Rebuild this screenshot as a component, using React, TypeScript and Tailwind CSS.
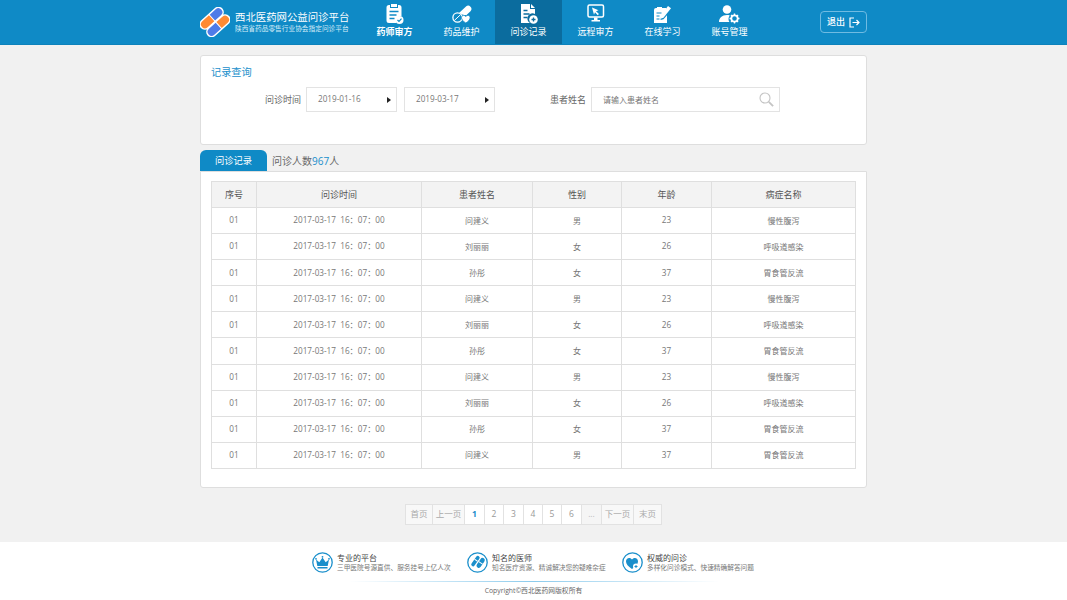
const font = { fontFamily: '"Open Sans", "Noto Sans CJK SC", sans-serif' };

const rows = [
  ["问建义", "男", "23", "慢性腹泻"],
  ["刘丽丽", "女", "26", "呼吸道感染"],
  ["孙彤", "女", "37", "胃食管反流"],
  ["问建义", "男", "23", "慢性腹泻"],
  ["刘丽丽", "女", "26", "呼吸道感染"],
  ["孙彤", "女", "37", "胃食管反流"],
  ["问建义", "男", "23", "慢性腹泻"],
  ["刘丽丽", "女", "26", "呼吸道感染"],
  ["孙彤", "女", "37", "胃食管反流"],
  ["问建义", "男", "37", "胃食管反流"],
];

function Logo() {
  return (
    <svg width="30" height="30" viewBox="0 0 30 30">
      <g transform="rotate(-42 15 15)">
        {/* upper capsule */}
        <rect x="0.500" y="4.500" width="29" height="11" rx="5.500" fill="#fff" />
        <path d="M2 10a4 4 0 0 1 4-4h9v8h-9a4 4 0 0 1-4-4z" fill="#ff8a33" />
        <path d="M28 10a4 4 0 0 0-4-4h-8v8h8a4 4 0 0 0 4-4z" fill="#4f7be8" />
        {/* lower capsule */}
        <rect x="0.500" y="14.500" width="29" height="11" rx="5.500" fill="#fff" />
        <path d="M2 20a4 4 0 0 1 4-4h9v8h-9a4 4 0 0 1-4-4z" fill="#4f7be8" />
        <path d="M28 20a4 4 0 0 0-4-4h-8v8h8a4 4 0 0 0 4-4z" fill="#ff8a33" />
      </g>
    </svg>
  );
}

function IconClipboard() {
  return (
    <svg width="18" height="22" viewBox="0 0 18 22" fill="#fff">
      <path d="M5 1h6v3h-6z" />
      <path d="M3 2h1v3h8v-3h1a2.500 2.500 0 0 1 2.500 2.500v8.500a5 5 0 0 0-5 7h-7.500a2.500 2.500 0 0 1-2.500-2.500v-13a2.500 2.500 0 0 1 2.500-2.500z" />
      <path d="M3.500 8.500h9M3.500 12h7M3.500 15.500h5" stroke="#0f8ac6" strokeWidth="1.500" />
      <circle cx="13.500" cy="17" r="4" fill="#fff" />
      <path d="M11.500 17l1.500 1.500 2.500-2.800" fill="none" stroke="#0f8ac6" strokeWidth="1.200" />
    </svg>
  );
}

function IconPills() {
  return (
    <svg width="21" height="20" viewBox="0 0 21 20">
      <path d="M8 9l7-6.500a3.300 3.300 0 0 1 4.500 4.800l-4 3.700h-3z" fill="#fff" />
      <circle cx="6.500" cy="13.500" r="4.600" fill="#0f8ac6" stroke="#fff" strokeWidth="1.300" />
      <path d="M3.300 16.500l6.400-6" stroke="#fff" strokeWidth="1" />
      <path d="M14.800 19c-3-2-4.300-3.500-4.300-5.300 0-1.500 1-2.400 2.100-2.400.9 0 1.700.5 2.200 1.300.5-.8 1.300-1.300 2.200-1.300 1.100 0 2.100.9 2.100 2.400 0 1.800-1.300 3.300-4.300 5.300z" fill="#fff" stroke="#0f8ac6" strokeWidth="0.800" />
    </svg>
  );
}

function IconDocPlus() {
  return (
    <svg width="18" height="20" viewBox="0 0 18 20" fill="#fff">
      <path d="M1 0h9v5h5v5a5 5 0 0 0-5 9h-9z" />
      <path d="M11 0l4 4h-4z" />
      <path d="M3.500 6.500h4M3.500 10h6M3.500 13.500h4" stroke="#0b6c9e" strokeWidth="1.500" />
      <circle cx="13.500" cy="15.500" r="4.300" />
      <path d="M11.500 15.500h4M13.500 13.500v4" stroke="#0b6c9e" strokeWidth="1.300" />
    </svg>
  );
}

function IconMonitor() {
  return (
    <svg width="18" height="20" viewBox="0 0 18 20" fill="none">
      <rect x="1" y="1" width="15.500" height="12" rx="1.500" stroke="#fff" strokeWidth="1.500" />
      <path d="M5 3.500l6.500 2.800-2.500 1 3 2.700-1.300 1.300-2.700-3-1 2.500z" fill="#fff" />
      <path d="M7 13.500h3.500v2.500h-3.500zM4.500 16h8.500v1.500h-8.500z" fill="#fff" />
    </svg>
  );
}

function IconStudy() {
  return (
    <svg width="19" height="18" viewBox="0 0 19 18" fill="#fff">
      <path d="M1 5a2 2 0 0 1 2-2h10v3l-5 6-.5 3 3-.8 3.500-4v7.800h-13z" />
      <path d="M4 2h5v2h-5z" />
      <path d="M3.500 8h5M3.500 11h3M3.500 14h3" stroke="#0f8ac6" strokeWidth="1" />
      <path d="M15 1l3 2.200-7.500 9.500-3 1 .3-3.200z" />
    </svg>
  );
}

function IconUserGear() {
  return (
    <svg width="21" height="19" viewBox="0 0 21 19" fill="#fff">
      <circle cx="8" cy="4.500" r="4.300" />
      <path d="M0 17c0-4 3-7 8-7 1 0 2 .1 2.800.4a6 6 0 0 0-.4 6.600z" />
      <circle cx="15.500" cy="13.500" r="3.200" fill="none" stroke="#fff" strokeWidth="1.800" />
      <path d="M15.500 8.500v2M15.500 16.500v2M10.500 13.500h2M18.500 13.500h2M12 10l1.400 1.400M17.600 15.600l1.400 1.400M12 17l1.400-1.400M17.600 11.400l1.400-1.400" stroke="#fff" strokeWidth="1.400" />
    </svg>
  );
}

function IconLogout() {
  return (
    <svg width="11" height="11" viewBox="0 0 11 11" fill="none" stroke="#fff" strokeWidth="1.200">
      <path d="M5 1h-4v9h4" />
      <path d="M3.500 5.500h6M7.500 3l2.500 2.500-2.500 2.500" />
    </svg>
  );
}

function IconSearch() {
  return (
    <svg width="15" height="15" viewBox="0 0 15 15" fill="none" stroke="#c4c4c4">
      <circle cx="6" cy="6" r="5" strokeWidth="1.100" />
      <path d="M9.800 9.800l4.300 4.300" strokeWidth="1.800" />
    </svg>
  );
}

function FootCircle({ children }: { children: React.ReactNode }) {
  return (
    <svg width="21" height="21" viewBox="0 0 21 21">
      <circle cx="10.500" cy="10.500" r="9.700" fill="#fff" stroke="#1a8fcb" strokeWidth="1.300" />
      {children}
    </svg>
  );
}

const navItems = [
  { label: "药师审方", icon: <IconClipboard />, bold: true },
  { label: "药品维护", icon: <IconPills /> },
  { label: "问诊记录", icon: <IconDocPlus />, active: true },
  { label: "远程审方", icon: <IconMonitor /> },
  { label: "在线学习", icon: <IconStudy /> },
  { label: "账号管理", icon: <IconUserGear /> },
];

const pages = [
  { t: "首页", w: "w-[27px]", word: true },
  { t: "上一页", w: "w-[32px]", word: true },
  { t: "1", w: "w-[20px]", on: true },
  { t: "2", w: "w-[19px]" },
  { t: "3", w: "w-[20px]" },
  { t: "4", w: "w-[19px]" },
  { t: "5", w: "w-[19px]" },
  { t: "6", w: "w-[20px]" },
  { t: "...", w: "w-[20px]", off: true },
  { t: "下一页", w: "w-[32px]", word: true },
  { t: "末页", w: "w-[28px]", word: true },
];

const features = [
  {
    title: "专业的平台",
    desc: "三甲医院号源直供、服务挂号上亿人次",
    icon: (
      <FootCircle>
        <path d="M4 7.500l3.300 2.700 3.200-4.700 3.200 4.700 3.300-2.700-1.300 6.500h-10.400z" fill="#1a8fcb" />
        <circle cx="4" cy="6.800" r="0.900" fill="#1a8fcb" />
        <circle cx="10.500" cy="4.800" r="0.900" fill="#1a8fcb" />
        <circle cx="17" cy="6.800" r="0.900" fill="#1a8fcb" />
        <path d="M5.500 15h10v1.500h-10z" fill="#1a8fcb" />
      </FootCircle>
    ),
  },
  {
    title: "知名的医师",
    desc: "知名医疗资源、精诚解决您的疑难杂症",
    icon: (
      <FootCircle>
        <g transform="rotate(35 10.500 10.500)">
          <rect x="6.200" y="4.500" width="3.600" height="12" rx="1.800" fill="#1a8fcb" />
          <rect x="6.200" y="9" width="3.600" height="1" fill="#fff" />
          <rect x="11" y="3.500" width="4.600" height="11" rx="2.300" fill="#1a8fcb" />
          <rect x="11" y="8.500" width="4.600" height="1" fill="#fff" />
        </g>
      </FootCircle>
    ),
  },
  {
    title: "权威的问诊",
    desc: "多样化问诊模式、快速精确解答问题",
    icon: (
      <FootCircle>
        <path d="M10 17c-4-2.800-6-5-6-7.500 0-2 1.400-3.500 3.200-3.500 1.200 0 2.200.6 2.800 1.600.6-1 1.700-1.600 2.900-1.600 1.800 0 3.100 1.500 3.100 3.500 0 2.500-2 4.700-6 7.500z" fill="#1a8fcb" />
        <circle cx="14" cy="14.500" r="3" fill="#fff" />
        <path d="M12.500 14.500h3M14 13v3" stroke="#1a8fcb" strokeWidth="1" />
      </FootCircle>
    ),
  },
];

const colClass = ["w-[45px]", "w-[165px]", "w-[111px]", "w-[89px]", "w-[90px]", "w-[144px]"];
const headers = ["序号", "问诊时间", "患者姓名", "性别", "年龄", "病症名称"];

export default function App() {
  return (
    <div style={font} className="flex min-h-[600px] w-full flex-col bg-[#f1f1f1] text-[#666]">
      {/* Header */}
      <header className="h-[45px] border-b border-[#0d82bb] bg-[#0f8ac6]">
        <div className="mx-auto flex h-[44px] w-[667px] items-stretch">
          <div className="flex w-[161px] items-center">
            <Logo />
            <div className="ml-[5px] text-white">
              <div className="text-[10.4px] leading-[13px]">西北医药网公益问诊平台</div>
              <div className="text-[6.7px] leading-[9px] text-[#d5ecf8]">陕西省药品零售行业协会指定问诊平台</div>
            </div>
          </div>
          {navItems.map((item) => (
            <div
              key={item.label}
              className={`flex w-[67px] flex-col items-center pt-[3px] text-white ${item.active ? "bg-[#0b6c9e]" : ""}`}
            >
              <div className="flex h-[22px] items-center justify-center">{item.icon}</div>
              <div className={`mt-[1px] text-[9px] leading-[12px] ${item.bold ? "font-bold" : ""}`}>{item.label}</div>
            </div>
          ))}
          <div className="flex flex-1 items-center justify-end">
            <div className="flex h-[22px] w-[47px] items-center justify-center gap-[4px] rounded-[4px] border border-[#6fbbe2] text-[9px] font-medium text-white">
              退出
              <IconLogout />
            </div>
          </div>
        </div>
      </header>

      <main className="mx-auto w-[667px] flex-1">
        {/* Search card */}
        <section className="mt-[10px] h-[90px] rounded-[3px] border border-[#dedede] bg-white px-[10px] pt-[9px]">
          <h2 className="text-[10.200px] leading-[14px] text-[#1a8fcb]">记录查询</h2>
          <div className="mt-[8px] flex items-center text-[9px]">
            <span className="ml-[54px] w-[36px]">问诊时间</span>
            <div className="ml-[5px] flex h-[25px] w-[91px] items-center justify-between border border-[#e3e3e3] pl-[11px] pr-[5px] text-[8.200px] text-[#777]">
              2019-01-16
              <span className="h-0 w-0 border-y-[3.500px] border-l-[4px] border-y-transparent border-l-[#222]" />
            </div>
            <div className="ml-[7px] flex h-[25px] w-[91px] items-center justify-between border border-[#e3e3e3] pl-[11px] pr-[5px] text-[8.200px] text-[#777]">
              2019-03-17
              <span className="h-0 w-0 border-y-[3.500px] border-l-[4px] border-y-transparent border-l-[#222]" />
            </div>
            <span className="ml-[55px] w-[36px]">患者姓名</span>
            <div className="ml-[5px] flex h-[25px] w-[189px] items-center justify-between border border-[#e3e3e3] pl-[11px] pr-[5px] text-[8px] text-[#777]">
              请输入患者姓名
              <IconSearch />
            </div>
          </div>
        </section>

        {/* Tabs */}
        <div className="mt-[5px] flex h-[21px] items-center">
          <div className="flex h-[21px] w-[67px] items-center justify-center rounded-t-[6px] bg-[#0f8ac6] text-[9.250px] text-white">
            问诊记录
          </div>
          <div className="ml-[5px] pt-[1px] text-[10px] text-[#666]">
            问诊人数<span className="text-[#1a8fcb]">967</span>人
          </div>
        </div>

        {/* Table card */}
        <section className="h-[317px] rounded-b-[3px] border border-[#dedede] bg-white px-[10px] pt-[9px]">
          <table className="w-[644px] table-fixed border-collapse">
            <colgroup>
              {colClass.map((c) => (
                <col key={c} className={c} />
              ))}
            </colgroup>
            <thead>
              <tr className="h-[26px] bg-[#f3f3f3] text-[9px] text-[#555]">
                {headers.map((h) => (
                  <th key={h} className="border border-[#dfdfdf] p-0 font-normal">
                    {h}
                  </th>
                ))}
              </tr>
            </thead>
            <tbody>
              {rows.map((r, i) => (
                <tr key={i} className="h-[26.1px] text-[8px] text-[#777]">
                  <td className="border border-[#dfdfdf] p-0 text-center text-[8.200px]">01</td>
                  <td className="border border-[#dfdfdf] p-0 text-center text-[8.200px]">2017-03-17&nbsp;&nbsp;16：07：00</td>
                  <td className="border border-[#dfdfdf] p-0 text-center">{r[0]}</td>
                  <td className="border border-[#dfdfdf] p-0 text-center">{r[1]}</td>
                  <td className="border border-[#dfdfdf] p-0 text-center text-[8.200px]">{r[2]}</td>
                  <td className="border border-[#dfdfdf] p-0 text-center">{r[3]}</td>
                </tr>
              ))}
            </tbody>
          </table>
        </section>

        {/* Pagination */}
        <div className="mt-[16px] flex justify-center">
          <div className="flex h-[21px] border-y border-l border-[#e2e2e2]">
            {pages.map((p) => (
              <div
                key={p.t}
                className={`flex items-center justify-center border-r border-[#e2e2e2] text-[8.500px] ${p.w} ${
                  p.on
                    ? "bg-white font-bold text-[#1a8fcb]"
                    : p.off
                      ? "bg-[#f5f5f5] text-[#bbb]"
                      : p.word
                        ? "bg-[#f8f8f8] text-[#aaa]"
                        : "bg-white text-[#999]"
                }`}
              >
                {p.t}
              </div>
            ))}
          </div>
        </div>
      </main>

      {/* Footer */}
      <footer className="mt-[17px] h-[58px] bg-white">
        <div className="ml-[312px] flex h-[39px] items-center pt-[2px]">
          {features.map((f) => (
            <div key={f.title} className="flex w-[155px] items-center">
              {f.icon}
              <div className="ml-[4px]">
                <div className="text-[8px] leading-[10px] text-[#444]">{f.title}</div>
                <div className="whitespace-nowrap text-[6.700px] leading-[10px] text-[#777]">{f.desc}</div>
              </div>
            </div>
          ))}
        </div>
        <div className="mx-auto h-px w-[370px] bg-gradient-to-r from-white via-[#8ccbec] to-white" />
        <div className="pt-[3px] text-center text-[6.800px] leading-[12px] text-[#666]">Copyright©西北医药网版权所有</div>
      </footer>
    </div>
  );
}
